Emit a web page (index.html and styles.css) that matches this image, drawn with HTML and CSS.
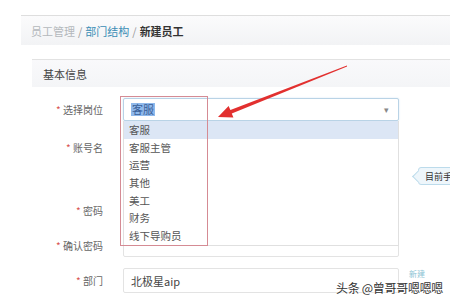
FILE: index.html
```html
<!DOCTYPE html>
<html>
<head>
<meta charset="utf-8">
<link rel="stylesheet" href="styles.css">
</head>
<body>
<div class="page">
  <div class="crumbs">
    <span class="c-muted">员工管理</span><span class="sep">/</span><span class="c-link">部门结构</span><span class="sep">/</span><span class="c-cur">新建员工</span>
  </div>
  <div class="panel">
    <div class="panel-head">基本信息</div>
    <div class="form">
      <div class="row r1">
        <label class="lbl"><i>*</i> 选择岗位</label>
        <div class="field select">
          <span class="sel-text">客服</span>
          <span class="caret">▾</span>
          <ul class="menu">
            <li class="hl">客服</li>
            <li>客服主管</li>
            <li>运营</li>
            <li>其他</li>
            <li>美工</li>
            <li>财务</li>
            <li>线下导购员</li>
          </ul>
        </div>
      </div>
      <div class="row r2">
        <label class="lbl"><i>*</i> 账号名</label>
        <div class="field"></div>
      </div>
      <div class="row r-hint">
        <div class="spacer"></div>
        <div class="tip">目前手</div>
      </div>
      <div class="row r3">
        <label class="lbl"><i>*</i> 密码</label>
        <div class="field"></div>
      </div>
      <div class="row r4">
        <label class="lbl"><i>*</i> 确认密码</label>
        <div class="field"></div>
      </div>
      <div class="row r5">
        <label class="lbl"><i>*</i> 部门</label>
        <div class="field text">北极星aip</div>
        <span class="new">新建</span>
      </div>
    </div>
  </div>
  <div class="redbox"></div>
  <svg class="arrow" width="450" height="300" viewBox="0 0 450 300">
    <polygon points="347.1,66.4 346.9,65.6 230.4,110.1 228.6,106 218,117 233.4,117.6 231.8,113.5" fill="#e2302f"/>
  </svg>
  <div class="mark">头条 @曾哥哥嗯嗯嗯</div>
</div>
</body>
</html>
```
FILE: styles.css
```css
* { box-sizing: border-box; }
html, body { margin: 0; padding: 0; background: #fff; }
body { font-family: "Noto Sans CJK SC", "Noto Sans", sans-serif; color: #555; }
.page { position: relative; width: 450px; height: 300px; overflow: hidden; padding-top: 15px; }
.crumbs {
  margin-left: 21px; height: 30px; border-top: 1px solid #dedede;
  background: linear-gradient(#fbfbfc, #f2f3f5);
  padding-left: 10px; display: flex; align-items: center; font-size: 11px; gap: 3px;
}
.c-muted { color: #b4b8bc; }
.c-link { color: #3b8db5; }
.c-cur { color: #333; font-weight: 600; }
.sep { color: #999; }
.panel { margin-left: 32px; margin-top: 14px; }
.panel-head {
  height: 28px; border-top: 1px solid #e2e2e2; background: linear-gradient(#f9f9fb, #f4f5f7);
  padding-left: 11px; display: flex; align-items: center; font-size: 11px; color: #444;
}
.form { padding-top: 11px; }
.row { display: flex; align-items: center; height: 24px; }
.r1 { height: 23px; }
.r2 { margin-top: 14px; }
.r-hint { margin-top: 8px; height: 18px; }
.r3 { margin-top: 13px; }
.r4 { margin-top: 12px; height: 23px; }
.r5 { margin-top: 11px; height: 25px; }
.lbl { width: 71px; text-align: right; font-size: 10px; color: #666; margin-right: 20px; flex: none; }
.lbl i { font-style: normal; color: #d9534f; }
.spacer { width: 91px; flex: none; }
.field {
  width: 276px; height: 100%; border: 1px solid #e3e3e3; border-radius: 2px; background: #fff;
  flex: none; position: relative;
}
.field.text { display: flex; align-items: center; padding-left: 7px; font-size: 11px; color: #444; }
.select { border-color: #b9d3e6; box-shadow: 0 0 2px #d3e5f2; display: flex; align-items: center; padding-left: 7px; }
.sel-text { background: #8fb9ec; color: #3a5f99; font-size: 11px; line-height: 13px; padding: 0 1px; }
.caret { position: absolute; right: 9px; top: 4px; font-size: 9px; color: #888; }
.menu {
  position: absolute; left: -1px; top: 22px; width: 276px; height: 125px; margin: 0; padding: 0;
  list-style: none; background: #fff; border: 1px solid #e0e0e0; border-top: none; z-index: 2;
}
.menu li { height: 17.7px; line-height: 17.7px; padding-left: 5px; font-size: 10.5px; color: #555; }
.menu li.hl { background: #dce6f5; }
.tip {
  margin-left: 295px; position: relative; height: 18px; padding: 0 6px; display: flex; align-items: center;
  background: #eef6fb; border: 1px solid #bcdbeb; border-radius: 3px; font-size: 9px; color: #333; white-space: nowrap;
}
.tip::before {
  content: ""; position: absolute; left: -5px; top: 4px; width: 8px; height: 8px;
  background: #eef6fb; border-left: 1px solid #bcdbeb; border-bottom: 1px solid #bcdbeb; transform: rotate(45deg);
}
.new { margin-left: 10px; font-size: 8px; line-height: 9px; color: #8cc4d4; align-self: flex-start; margin-top: 1px; }
.redbox {
  position: absolute; left: 120px; top: 96px; width: 88px; height: 150px;
  border: 1px solid #d58b94; z-index: 3;
}
.arrow { position: absolute; left: 0; top: 0; z-index: 4; }
.mark {
  position: absolute; left: 336px; top: 279px; font-size: 12px; color: #333;
  text-shadow: 0 0 2px #fff, 0 0 2px #fff; z-index: 5; letter-spacing: -0.3px;
}
```
